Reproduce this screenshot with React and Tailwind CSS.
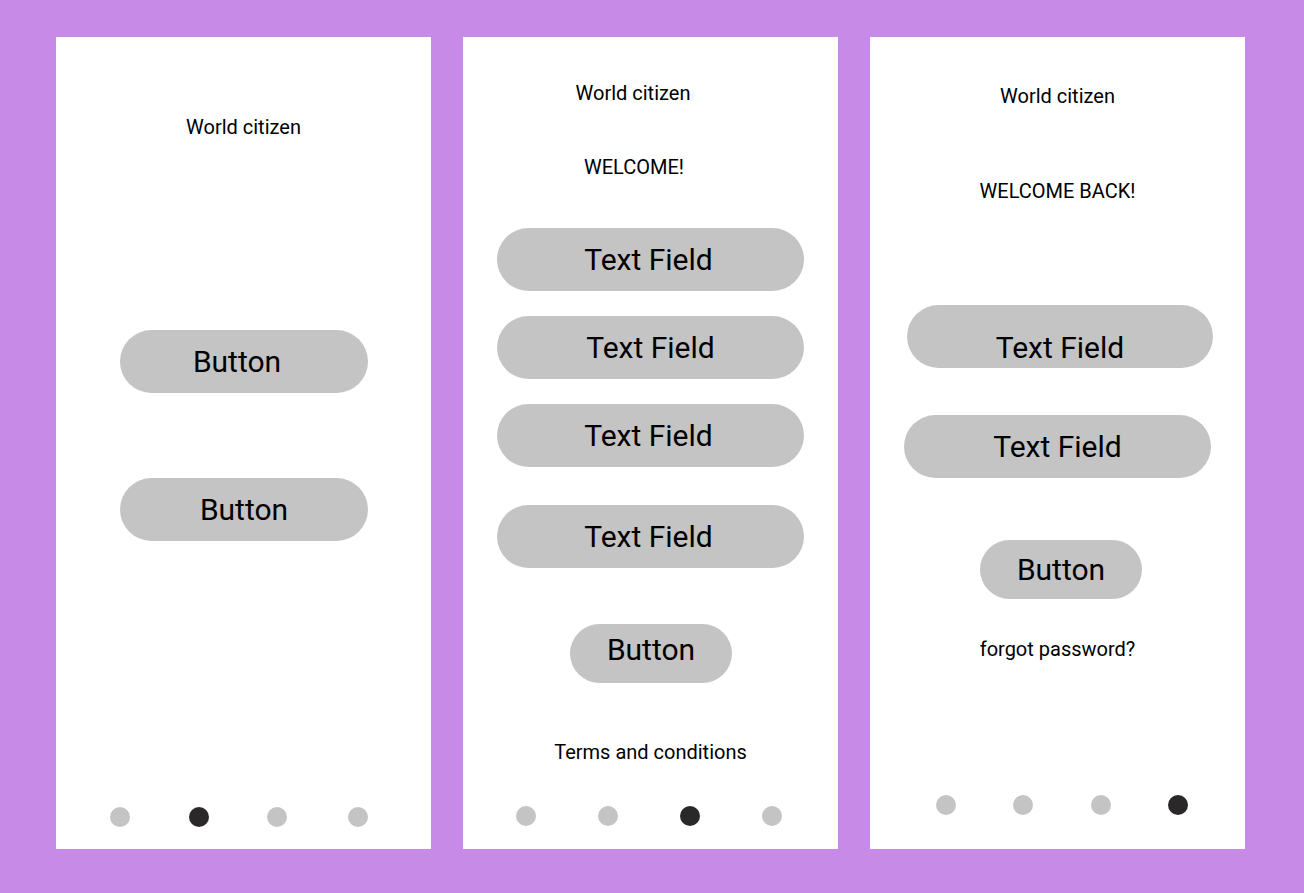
import React from "react";

function Pill({ className = "", textClass = "", children }) {
  return (
    <div
      className={`self-start rounded-full bg-[#c4c4c4] flex items-center justify-center text-[30px] leading-none text-black ${className}`}
    >
      <span className={textClass}>{children}</span>
    </div>
  );
}

function Label({ className = "", children }) {
  return (
    <div className={`self-center text-center text-[20px] leading-[24px] text-black ${className}`}>
      {children}
    </div>
  );
}

function Dots({ dots, className = "" }) {
  return (
    <div className={`flex ${className}`}>
      {dots.map((d, i) => (
        <div
          key={i}
          className={`w-5 h-5 rounded-full ${d.dark ? "bg-[#2a2829]" : "bg-[#c4c4c4]"} ${d.cls}`}
        />
      ))}
    </div>
  );
}

function Panel({ children }) {
  return <div className="w-[375px] h-[812px] bg-white flex flex-col shrink-0">{children}</div>;
}

export default function App() {
  return (
    <div
      className="w-full h-[893px] bg-[#c78ae7] flex gap-[32px] pl-[56px] pt-[37px]"
      style={{ fontFamily: "Roboto, 'Liberation Sans', sans-serif" }}
    >
      {/* splash */}
      <Panel>
        <Label className="mt-[78px]">World citizen</Label>
        <Pill className="ml-[64px] w-[248px] h-[63px] mt-[191px]" textClass="mr-[14px]">
          Button
        </Pill>
        <Pill className="ml-[64px] w-[248px] h-[63px] mt-[85px]">Button</Pill>
        <Dots
          className="mt-auto mb-[22px]"
          dots={[
            { cls: "ml-[54px]" },
            { cls: "ml-[59px]", dark: true },
            { cls: "ml-[58px]" },
            { cls: "ml-[61px]" },
          ]}
        />
      </Panel>

      {/* sign up */}
      <Panel>
        <Label className="mt-[44px] mr-[35px]">World citizen</Label>
        <Label className="mt-[50px] mr-[33px]">WELCOME!</Label>
        <Pill className="ml-[34px] w-[307px] h-[63px] mt-[49px]" textClass="mr-[4px]">
          Text Field
        </Pill>
        <Pill className="ml-[34px] w-[307px] h-[63px] mt-[25px]">Text Field</Pill>
        <Pill className="ml-[34px] w-[307px] h-[63px] mt-[25px]" textClass="mr-[4px]">
          Text Field
        </Pill>
        <Pill className="ml-[34px] w-[307px] h-[63px] mt-[38px]" textClass="mr-[4px]">
          Text Field
        </Pill>
        <Pill className="ml-[107px] w-[162px] h-[59px] mt-[56px] pb-[8px]">Button</Pill>
        <Label className="mt-[57px]">Terms and conditions</Label>
        <Dots
          className="mt-auto mb-[23px]"
          dots={[
            { cls: "ml-[53px]" },
            { cls: "ml-[62px]" },
            { cls: "ml-[62px]", dark: true },
            { cls: "ml-[62px]" },
          ]}
        />
      </Panel>

      {/* log in */}
      <Panel>
        <Label className="mt-[47px]">World citizen</Label>
        <Label className="mt-[71px]">WELCOME BACK!</Label>
        <Pill className="ml-[37px] w-[306px] h-[63px] mt-[102px] pt-[22px]">Text Field</Pill>
        <Pill className="ml-[34px] w-[307px] h-[63px] mt-[47px]">Text Field</Pill>
        <Pill className="ml-[110px] w-[162px] h-[59px] mt-[62px]">Button</Pill>
        <Label className="mt-[38px]">forgot password?</Label>
        <Dots
          className="mt-auto mb-[34px]"
          dots={[
            { cls: "ml-[66px]" },
            { cls: "ml-[57px]" },
            { cls: "ml-[58px]" },
            { cls: "ml-[57px]", dark: true },
          ]}
        />
      </Panel>
    </div>
  );
}
